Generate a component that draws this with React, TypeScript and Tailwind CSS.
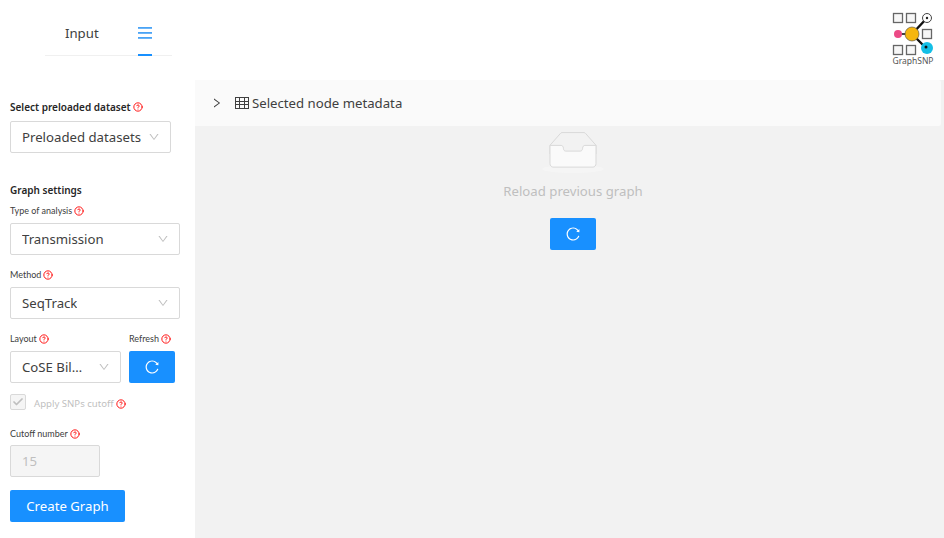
import type { ReactNode } from "react";
import { CircleHelp, Check } from "lucide-react";

const RELOAD =
  "M909.1 209.3l-56.4 44.1C775.8 155.1 656.2 92 521.9 92 290 92 102.3 279.5 102 511.5 101.7 743.7 289.8 932 521.9 932c181.3 0 335.8-115 394.6-276.1 1.5-4.2-.7-8.9-4.9-10.3l-56.7-19.5a8 8 0 00-10.1 4.8c-1.8 5-3.8 10-5.9 14.9-17.3 41-42.1 77.8-73.7 109.4A344.77 344.77 0 01655.9 829c-42.3 17.9-87.4 27-133.8 27-46.5 0-91.5-9.1-133.8-27A341.5 341.5 0 01279 755.2a342.16 342.16 0 01-73.7-109.4c-17.9-42.4-27-87.4-27-133.9s9.1-91.5 27-133.9c17.3-41 42.1-77.8 73.7-109.4 31.6-31.6 68.4-56.4 109.3-73.8 42.3-17.9 87.4-27 133.8-27 46.5 0 91.5 9.1 133.8 27a341.5 341.5 0 01109.3 73.8c9.9 9.9 19.2 20.4 27.8 31.4l-60.2 47a8 8 0 003 14.1l175.6 43c5 1.2 9.9-2.6 9.9-7.7l.8-180.9c-.1-6.6-7.8-10.3-13-6.2z";
const DOWN =
  "M884 256h-75c-5.1 0-9.9 2.5-12.9 6.6L512 654.2 227.9 262.6c-3-4.1-7.8-6.6-12.9-6.6h-75c-6.5 0-10.3 7.4-6.5 12.7l352.6 486.1c12.8 17.6 39 17.6 51.7 0l352.6-486.1c3.9-5.3.1-12.7-6.4-12.7z";

function Help({ className = "" }: { className?: string }) {
  return <CircleHelp size={10} strokeWidth={2.2} className={`text-[#f00] shrink-0 ${className}`} />;
}

function FieldLabel({ children, bold }: { children: ReactNode; bold?: boolean }) {
  return (
    <div className={`flex items-center gap-[2px] h-[14px] leading-[14px] ${bold ? "text-[10px] font-semibold text-[#262626]" : "text-[9px] font-['Lato',sans-serif] text-[#404040]"}`}>
      {children}
      <Help />
    </div>
  );
}

function Select({ value, width }: { value: string; width: string }) {
  return (
    <div className={`flex items-center justify-between h-8 ${width} pl-[11px] pr-[10px] bg-white border border-[#d9d9d9] rounded-[2px] text-[13.2px] text-[#404040]`}>
      <span className="truncate pt-px">{value}</span>
      <svg viewBox="0 0 1024 1024" width="12" height="12" fill="#bfbfbf" className="shrink-0 ml-[7px]">
        <path d={DOWN} />
      </svg>
    </div>
  );
}

function ReloadButton() {
  return (
    <div className="flex items-center justify-center w-[46px] h-8 bg-[#1890ff] rounded-[2px]">
      <svg viewBox="0 0 1024 1024" width="16" height="16" fill="#fff">
        <path d={RELOAD} />
      </svg>
    </div>
  );
}

function Logo() {
  return (
    <div className="flex flex-col items-center w-[46px]">
      <svg viewBox="0 0 46 46" width="46" height="46">
        <g fill="#f7f7f7" stroke="#666" strokeWidth="1.3">
          <rect x="3.5" y="3.5" width="9" height="9" />
          <rect x="16.5" y="3.5" width="9" height="9" />
          <rect x="32.5" y="19.5" width="9" height="9" />
          <rect x="3.5" y="35.5" width="9" height="9" />
          <rect x="16.5" y="35.5" width="9" height="9" />
        </g>
        <path d="M22 24 L37 8 M22 24 L37 39" stroke="#111" strokeWidth="2.4" />
        <path d="M8 24 H22" stroke="#111" strokeWidth="1.6" />
        <circle cx="8" cy="24" r="4" fill="#ec4a86" />
        <circle cx="37" cy="8" r="4.5" fill="#fff" stroke="#444" strokeWidth="1" />
        <circle cx="37" cy="8" r="1.2" fill="#222" />
        <circle cx="37" cy="38" r="6" fill="#14bfe6" />
        <circle cx="36" cy="37" r="1.5" fill="#111" />
        <circle cx="22" cy="24" r="7" fill="#f5b60f" stroke="#444" strokeWidth="0.6" />
      </svg>
      <span className="text-[8.5px] leading-[9px] text-[#555] whitespace-nowrap">GraphSNP</span>
    </div>
  );
}

export default function App() {
  return (
    <div className="flex flex-col w-[944px] h-[538px] overflow-hidden bg-white font-['Noto_Sans',sans-serif]">
      <header className="flex justify-between h-20 shrink-0">
        <nav className="flex items-stretch h-[56px] ml-[45px] w-[127px] border-b border-[#f0f0f0]">
          <div className="flex items-center w-[93px] pl-5 pt-3 text-[13.2px] text-[#404040]">Input</div>
          <div className="relative flex items-center pt-[10px]">
            <svg width="14" height="12" viewBox="0 0 14 12" fill="#4aa3f5">
              <rect y="0" width="14" height="1.8" />
              <rect y="5" width="14" height="1.8" />
              <rect y="10" width="14" height="1.8" />
            </svg>
            <span className="absolute left-0 right-0 bottom-[-1px] h-[2px] bg-[#1890ff]" />
          </div>
        </nav>
        <div className="pt-[10px] pr-[8px]">
          <Logo />
        </div>
      </header>

      <div className="flex flex-1 min-h-0">
        <aside className="w-[195px] shrink-0 pl-[10px] pt-5">
          <FieldLabel bold>Select preloaded dataset</FieldLabel>
          <div className="mt-[7px]">
            <Select value="Preloaded datasets" width="w-[161px]" />
          </div>

          <div className="mt-[30px] h-[14px] text-[10px] leading-[14px] font-semibold text-[#262626]">Graph settings</div>
          <div className="mt-[7px]">
            <FieldLabel>Type of analysis</FieldLabel>
          </div>
          <div className="mt-[5px]">
            <Select value="Transmission" width="w-[170px]" />
          </div>
          <div className="mt-[13px]">
            <FieldLabel>Method</FieldLabel>
          </div>
          <div className="mt-[5px]">
            <Select value="SeqTrack" width="w-[170px]" />
          </div>
          <div className="flex gap-2 mt-[13px]">
            <div className="w-[111px]">
              <FieldLabel>Layout</FieldLabel>
              <div className="mt-[5px]">
                <Select value="CoSE Bil…" width="w-[111px]" />
              </div>
            </div>
            <div>
              <FieldLabel>Refresh</FieldLabel>
              <div className="mt-[5px]">
                <ReloadButton />
              </div>
            </div>
          </div>
          <div className="flex items-center mt-[11px] h-4">
            <div className="flex items-center justify-center w-4 h-4 bg-[#f5f5f5] border border-[#d9d9d9] rounded-[2px]">
              <Check size={12} strokeWidth={3.5} className="text-[#bfbfbf]" />
            </div>
            <span className="ml-2 pt-[5px] text-[9.6px] text-[#bfbfbf]">Apply SNPs cutoff</span>
            <Help className="ml-[2px] mt-[4px]" />
          </div>
          <div className="mt-[17px]">
            <FieldLabel>Cutoff number</FieldLabel>
          </div>
          <div className="flex items-center w-[90px] h-8 mt-[4px] pl-[11px] pt-px bg-[#f5f5f5] border border-[#d9d9d9] rounded-[2px] text-[13.2px] text-[#bfbfbf]">
            15
          </div>
          <div className="flex items-center justify-center w-[115px] h-8 mt-[13px] pt-px bg-[#1890ff] rounded-[2px] text-[13.2px] text-white">
            Create Graph
          </div>
        </aside>

        <main className="flex-1 flex flex-col bg-[#f2f2f2]">
          <div className="flex items-center h-[46px] mr-[3px] pl-4 bg-[#fafafa] rounded-r-[2px] text-[13.2px] text-[#404040]">
            <svg viewBox="0 0 1024 1024" width="12" height="12" fill="#404040" className="-rotate-90">
              <path d={DOWN} />
            </svg>
            <svg width="14" height="12" viewBox="0 0 14 12" fill="none" stroke="#404040" strokeWidth="1" className="ml-[12px] mr-[3px]">
              <rect x="0.5" y="0.5" width="13" height="11" />
              <path d="M0 4.5H14M0 7.5H14M4.5 0V12M9.5 0V12" />
            </svg>
            <span className="pt-px">Selected node metadata</span>
          </div>
          <div className="flex flex-col items-center pl-[7px]">
            <svg width="64" height="41" viewBox="0 0 64 41" className="mt-[6px]">
              <ellipse cx="32" cy="37" rx="31" ry="4" fill="#f5f5f5" />
              <g fillRule="nonzero" stroke="#d9d9d9" fill="none">
                <path d="M55 13.3L44.9 1.8C44.4 1 43.7.6 43 .6H21c-.7 0-1.4.4-1.9 1.2L9 13.3V22h46v-8.7z" />
                <path d="M41.6 16.3c0-1.6 1-2.9 2.2-2.9H55v18c0 2-1.3 3.7-2.9 3.7H11.9C10.3 35 9 33.4 9 31.4V13.4h11.2c1.2 0 2.2 1.3 2.2 2.9s1 2.8 2.2 2.8h14.8c1.2 0 2.2-1.3 2.2-2.8z" fill="#fafafa" />
              </g>
            </svg>
            <div className="mt-[7px] text-[13.2px] leading-[22px] text-[#bfbfbf]">Reload previous graph</div>
            <div className="mt-[16px]">
              <ReloadButton />
            </div>
          </div>
        </main>
      </div>
    </div>
  );
}
